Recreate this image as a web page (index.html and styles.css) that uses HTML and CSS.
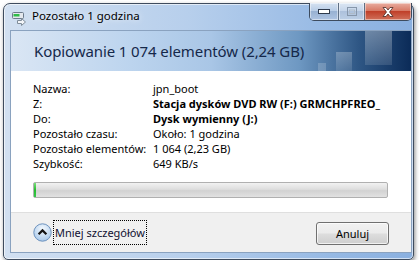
FILE: index.html
```html
<!DOCTYPE html>
<html lang="pl">

<head>
    <meta charset="UTF-8">
    <title>Pozostało 1 godzina</title>
    <link rel="stylesheet" href="styles.css">
</head>

<body>
    <div class="window">
        <div class="titlebar">
            <svg class="app-icon" width="16" height="16" viewBox="0 0 16 16">
                <rect x="1.5" y="2.5" width="11" height="6" rx="1" fill="#e4e8ee" stroke="#6d7b8b"/>
                <rect x="2.5" y="4" width="6" height="2.5" fill="#2fbd48"/>
                <path d="M6.5 10.5h4v-2l4 3.5-4 3.5v-2h-4z" fill="#f3f5f8" stroke="#7f8c99" stroke-linejoin="round"/>
            </svg>
            <span class="title">Pozostało 1 godzina</span>
            <div class="caption-buttons">
                <div class="cap-btn cap-min">
                    <svg width="12" height="5" viewBox="0 0 12 5"><rect x="0.5" y="0.5" width="11" height="4" fill="#fff" stroke="#2e3a4c"/></svg>
                </div>
                <div class="cap-btn cap-max">
                    <svg width="10" height="9" viewBox="0 0 10 9"><rect x="0.5" y="0.5" width="9" height="8" fill="none" stroke="#8797ab"/><rect x="2.5" y="3" width="5" height="3.5" fill="none" stroke="#aebbc9"/></svg>
                </div>
                <div class="cap-btn cap-close">
                    <svg width="12" height="10" viewBox="0 0 12 10"><path d="M1 0.5h3l2 2.5 2-2.5h3l-3.5 4.5 3.5 4.5h-3l-2-2.5-2 2.5h-3l3.5-4.5z" fill="#fff" stroke="#4a2a24" stroke-width="0.8" stroke-linejoin="round"/></svg>
                </div>
            </div>
        </div>

        <div class="client">
            <div class="banner">Kopiowanie 1 074 elementów (2,24 GB)</div>

            <div class="details">
                <div class="rows">
                    <span>Nazwa:</span><span>jpn_boot</span>
                    <span>Z:</span><span class="strong">Stacja dysków DVD RW (F:) GRMCHPFREO_</span>
                    <span>Do:</span><span class="strong">Dysk wymienny (J:)</span>
                    <span>Pozostało czasu:</span><span>Około: 1 godzina</span>
                    <span>Pozostało elementów:</span><span>1 064 (2,23 GB)</span>
                    <span>Szybkość:</span><span>649 KB/s</span>
                </div>
                <div class="progress">
                    <div class="progress-fill" style="width: 2px"></div>
                </div>
            </div>

            <div class="footer">
                <div class="more">
                    <svg width="19" height="19" viewBox="0 0 19 19">
                        <defs>
                            <radialGradient id="orb" cx="50%" cy="30%" r="70%">
                                <stop offset="0" stop-color="#f4f9fe"/>
                                <stop offset="1" stop-color="#a9c9ea"/>
                            </radialGradient>
                        </defs>
                        <circle cx="9.5" cy="9.5" r="8.7" fill="url(#orb)" stroke="#6d92bd"/>
                        <path d="M5.6 11.3 9.5 7.4l3.9 3.9" fill="none" stroke="#151515" stroke-width="2.2"/>
                    </svg>
                    <span class="more-label">Mniej szczegółów</span>
                </div>
                <button class="btn">Anuluj</button>
            </div>
        </div>
    </div>
</body>

</html>
```

FILE: styles.css
```css
body {
    margin: 0;
    background: #fff;
    font-family: "Noto Sans", sans-serif;
    font-size: 11px;
    color: #000;
}

.window {
    margin: 3px 0 0 3px;
    width: 409px;
    height: 255px;
    border: 1px solid #3f4c5e;
    border-radius: 7px 7px 5px 5px;
    background: linear-gradient(to right, #d2e0f1 0%, #b7cfec 45%, #96b9e4 80%, #8ab0e0 100%);
    box-shadow: 1px 2px 4px rgba(0, 0, 0, 0.45), inset 0 0 0 1px rgba(255, 255, 255, 0.6);
    display: flex;
    flex-direction: column;
}

.titlebar {
    height: 26px;
    display: flex;
    align-items: flex-start;
}

.app-icon {
    margin: 6px 0 0 7px;
}

.title {
    margin: 4px 0 0 5px;
    line-height: 16px;
    font-size: 11.5px;
    color: #000;
    text-shadow: 0 0 6px rgba(255, 255, 255, 0.9);
}

.caption-buttons {
    margin: -1px 1px 0 auto;
    display: flex;
    height: 17px;
    border: 1px solid #3d4b5e;
    border-top: none;
    border-radius: 0 0 5px 5px;
    overflow: hidden;
}

.cap-btn {
    display: flex;
    align-items: center;
    justify-content: center;
    border-left: 1px solid #5f6f84;
    box-shadow: inset 0 0 0 1px rgba(255, 255, 255, 0.45);
}

.cap-min {
    width: 28px;
    border-left: none;
    background: linear-gradient(#d5e2f1, #b9cde6 45%, #98b1d2 50%, #aec4e2);
}

.cap-max {
    width: 25px;
    background: linear-gradient(#dbe6f3, #c5d5ea 45%, #adc1dc 50%, #bccfe6);
}

.cap-close {
    width: 46px;
    background: linear-gradient(#e9ada0, #d77a66 45%, #c0402a 50%, #d0705a);
}

.client {
    flex: 1;
    margin: 0 1px 6px 6px;
    border: 1px solid #8aa2bf;
    display: flex;
    flex-direction: column;
}

.banner {
    height: 40px;
    padding-left: 23px;
    display: flex;
    align-items: center;
    font-size: 15px;
    letter-spacing: -0.1px;
    color: #15284a;
    background:
        linear-gradient(to bottom, rgba(255, 255, 255, 0.32), rgba(255, 255, 255, 0.12)) 354px 0 / 27px 34px no-repeat,
        linear-gradient(to bottom, rgba(255, 255, 255, 0.25), rgba(255, 255, 255, 0.1)) 325px 21px / 16px 19px no-repeat,
        linear-gradient(rgba(255, 255, 255, 0.18), rgba(255, 255, 255, 0.18)) 307px 32px / 8px 8px no-repeat,
        linear-gradient(to right, #dae6f4 0%, #bcd4ee 30%, #a9c6e6 50%, #6e98c2 72%, #2e5684 87%, #0b2b58 100%);
}

.details {
    flex: 1;
    background: #fff;
    padding: 10px 23px 0 22px;
}

.rows {
    display: grid;
    grid-template-columns: 120px 1fr;
    line-height: 15px;
    white-space: nowrap;
}

.strong {
    font-weight: bold;
}

.progress {
    margin-top: 11px;
    height: 14px;
    border: 1px solid #b0b0b0;
    border-radius: 2px;
    background: linear-gradient(#f2f2f2, #dedede 45%, #d2d2d2 55%, #e2e2e2);
}

.progress-fill {
    height: 100%;
    background: linear-gradient(#7be07c, #25bb2f 50%, #37c94a);
}

.footer {
    height: 39px;
    border-top: 1px solid #dfdfdf;
    background: #f0f0f0;
    padding: 0 22px 0 22px;
    display: flex;
    align-items: center;
    justify-content: space-between;
}

.more {
    display: flex;
    align-items: center;
}

.more-label {
    margin-left: 1px;
    padding: 3px 1px;
    border: 1px dotted #000;
    line-height: 17px;
    color: #101030;
}

.btn {
    width: 73px;
    height: 23px;
    margin-top: 1px;
    border: 1px solid #707070;
    border-radius: 3px;
    background: linear-gradient(#f2f2f2, #ebebeb 48%, #dddddd 52%, #cfcfcf);
    box-shadow: inset 0 0 0 1px rgba(255, 255, 255, 0.7);
    font-family: "Noto Sans", sans-serif;
    font-size: 11px;
    color: #000;
    padding: 0;
}
```
